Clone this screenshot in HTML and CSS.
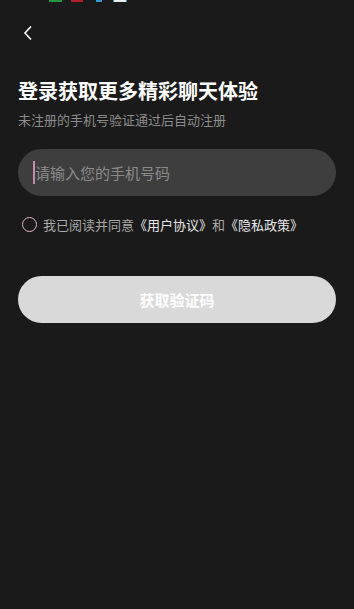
FILE: index.html
```html
<!DOCTYPE html>
<html lang="zh">
<head>
<meta charset="utf-8">
<link rel="stylesheet" href="styles.css">
</head>
<body>
<div class="page">
  <div class="status-remnants">
    <span class="dot green"></span>
    <span class="dot red"></span>
    <span class="dot blue"></span>
    <span class="dot white"></span>
  </div>
  <div class="nav">
    <svg class="back" width="12" height="16" viewBox="0 0 12 16"><path d="M9 1.5 L3 8 L9 14.5" fill="none" stroke="#ffffff" stroke-width="1.6"/></svg>
  </div>
  <h1 class="title">登录获取更多精彩聊天体验</h1>
  <p class="subtitle">未注册的手机号验证通过后自动注册</p>
  <div class="input">
    <span class="caret"></span>
    <span class="placeholder">请输入您的手机号码</span>
  </div>
  <div class="agree">
    <span class="radio"></span>
    <span class="agree-text">我已阅读并同意<span class="link">《用户协议》</span>和<span class="link">《隐私政策》</span></span>
  </div>
  <div class="button">获取验证码</div>
</div>
</body>
</html>
```
FILE: styles.css
```css
* { box-sizing: border-box; }
html, body { margin: 0; padding: 0; background: #1a1a1a; }
body { font-family: "Noto Sans CJK SC", "Noto Sans", sans-serif; color: #fff; }
.page { position: relative; width: 354px; height: 609px; padding: 0 18px; }
.status-remnants { position: absolute; top: 0; left: 0; width: 354px; height: 2px; }
.dot { position: absolute; top: 0; height: 2px; }
.green { left: 49px; width: 13px; background: #1f9a3a; }
.red { left: 71px; width: 12px; background: #b0202a; }
.blue { left: 96px; width: 6px; background: #2a9ad8; }
.white { left: 113px; width: 14px; background: #e8f0f0; border-left: 1px solid #3a9a9a; border-right: 1px solid #3a9a9a; }
.nav { height: 66px; padding-top: 25px; padding-left: 4px; }
.back { display: block; }
.title { margin: 10px 0 0; font-size: 20px; line-height: 30px; font-weight: 700; letter-spacing: 0; }
.subtitle { margin: 4px 0 0; font-size: 13px; line-height: 20px; color: #8c8c8c; }
.input { margin-top: 19px; height: 47px; border-radius: 24px; background: #3e3e3e; display: flex; align-items: center; padding-left: 15px; }
.caret { width: 2px; height: 23px; background: #c88aa8; margin-right: 0; }
.placeholder { font-size: 15px; color: #8a8a8a; }
.agree { margin-top: 18px; display: flex; align-items: center; height: 20px; }
.radio { width: 15px; height: 15px; border: 1.5px solid #e3b3cc; border-radius: 50%; margin-left: 4px; margin-right: 6px; }
.agree-text { font-size: 13px; color: #a8a8a8; }
.link { color: #e8e8e8; }
.button { margin-top: 42px; height: 47px; border-radius: 24px; background: #d9d9d9; color: #fff; font-size: 15px; font-weight: 700; display: flex; align-items: center; justify-content: center; }
```
